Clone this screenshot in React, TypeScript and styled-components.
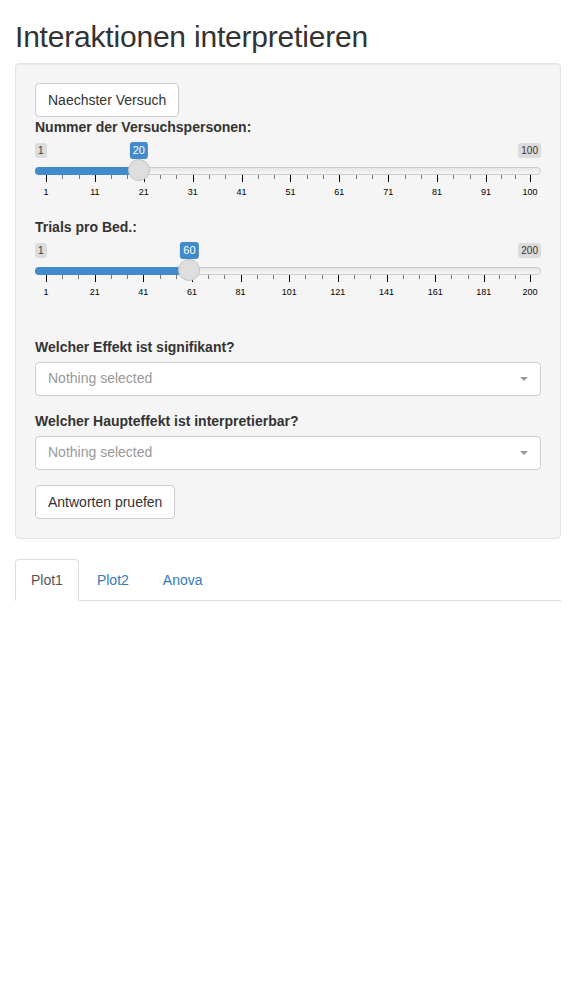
import styled, { createGlobalStyle } from "styled-components";

const GlobalStyle = createGlobalStyle`
  html, body {
    margin: 0;
    padding: 0;
    background: #ffffff;
  }
  body {
    font-family: "Liberation Sans", Arial, sans-serif;
    font-size: 14px;
    line-height: 1.42857;
    color: #333333;
  }
  * {
    box-sizing: border-box;
  }
`;

const Page = styled.div`
  padding: 0 15px;
`;

const Title = styled.h2`
  font-size: 30px;
  font-weight: 500;
  line-height: 1.1;
  letter-spacing: -0.2px;
  margin: 20px 0 10px;
`;

const Well = styled.div`
  display: flex;
  flex-direction: column;
  background: #f5f5f5;
  border: 1px solid #e3e3e3;
  border-radius: 4px;
  box-shadow: inset 0 1px 1px rgba(0, 0, 0, 0.05);
  padding: 19px;
  margin-bottom: 20px;
`;

const Button = styled.button`
  align-self: flex-start;
  height: 34px;
  padding: 6px 12px;
  font-family: inherit;
  font-size: 14px;
  line-height: 20px;
  color: #333333;
  background: #ffffff;
  border: 1px solid #cccccc;
  border-radius: 4px;
`;

const FormGroup = styled.div<{ $top?: number }>`
  margin-top: ${(p) => p.$top ?? 0}px;
  margin-bottom: 15px;
`;

const Label = styled.label`
  display: block;
  font-weight: bold;
  line-height: 20px;
  margin-bottom: 5px;
`;

const Irs = styled.div`
  position: relative;
  height: 60px;
`;

const Line = styled.div`
  position: absolute;
  left: 0;
  right: 0;
  top: 25px;
  height: 8px;
  border: 1px solid #cccccc;
  border-radius: 16px;
  background: linear-gradient(to bottom, #dedede -50%, #ffffff 150%);
`;

const Bar = styled.div`
  position: absolute;
  left: 0;
  top: 25px;
  height: 8px;
  background: #428bca;
  border-radius: 8px 0 0 8px;
`;

const Handle = styled.div`
  position: absolute;
  top: 17px;
  width: 22px;
  height: 22px;
  background: #dedede;
  border: 1px solid #c4c4c4;
  border-radius: 50%;
`;

const EdgeLabel = styled.span<{ $side: "left" | "right" }>`
  position: absolute;
  top: 1px;
  ${(p) => (p.$side === "left" ? "left: 0;" : "right: 0;")}
  font-size: 10px;
  line-height: 1.333;
  padding: 1px 3px;
  color: #333333;
  background: rgba(0, 0, 0, 0.1);
  border-radius: 3px;
`;

const ValueLabel = styled.span`
  position: absolute;
  top: 0;
  transform: translateX(-50%);
  font-size: 11px;
  line-height: 1.333;
  padding: 1px 3px;
  color: #ffffff;
  background: #428bca;
  border-radius: 3px;
`;

const Tick = styled.span<{ $small?: boolean }>`
  position: absolute;
  top: 33px;
  width: 1px;
  height: ${(p) => (p.$small ? 4 : 7)}px;
  background: ${(p) => (p.$small ? "#777" : "#000")};
`;

const TickText = styled.span`
  position: absolute;
  top: 44px;
  transform: translateX(-50%);
  font-size: 9px;
  line-height: 12px;
  color: #000000;
  white-space: nowrap;
`;

const Select = styled.div`
  display: flex;
  align-items: center;
  justify-content: space-between;
  height: 34px;
  padding: 6px 12px;
  background: #ffffff;
  border: 1px solid #cccccc;
  border-radius: 4px;
  color: #999999;
`;

const Caret = styled.span`
  width: 0;
  height: 0;
  border-top: 4px solid #999999;
  border-left: 4px solid transparent;
  border-right: 4px solid transparent;
`;

const Tabs = styled.ul`
  display: flex;
  list-style: none;
  margin: 0;
  padding: 0;
  border-bottom: 1px solid #dddddd;
`;

const Tab = styled.li<{ $active?: boolean }>`
  margin-right: 2px;
  margin-bottom: -1px;
  padding: 10px 15px;
  line-height: 20px;
  border: 1px solid ${(p) => (p.$active ? "#dddddd" : "transparent")};
  border-bottom-color: ${(p) => (p.$active ? "#ffffff" : "transparent")};
  border-radius: 4px 4px 0 0;
  background: ${(p) => (p.$active ? "#ffffff" : "transparent")};
  color: ${(p) => (p.$active ? "#555555" : "#337ab7")};
`;

type SliderProps = {
  label: string;
  min: number;
  max: number;
  value: number;
  ticks: number[];
};

function Slider({ label, min, max, value, ticks }: SliderProps) {
  const frac = (v: number) => (v - min) / (max - min);
  const at = (v: number) => `calc(11px + ${frac(v)} * (100% - 22px))`;
  const small: number[] = [];
  for (let i = 0; i < ticks.length - 1; i++) {
    const d = (ticks[i + 1] - ticks[i]) / 3;
    small.push(ticks[i] + d, ticks[i] + 2 * d);
  }
  return (
    <FormGroup>
      <Label>{label}</Label>
      <Irs>
        <Line />
        <Bar style={{ width: at(value) }} />
        <EdgeLabel $side="left">{min}</EdgeLabel>
        <EdgeLabel $side="right">{max}</EdgeLabel>
        {small.map((v) => (
          <Tick key={"s" + v} $small style={{ left: at(v) }} />
        ))}
        {ticks.map((v) => (
          <Tick key={v} style={{ left: at(v) }} />
        ))}
        {ticks.map((v) => (
          <TickText key={"t" + v} style={{ left: at(v) }}>
            {v}
          </TickText>
        ))}
        <Handle style={{ left: `calc(${frac(value)} * (100% - 22px))` }} />
        <ValueLabel style={{ left: at(value) }}>{value}</ValueLabel>
      </Irs>
    </FormGroup>
  );
}

export default function App() {
  return (
    <Page>
      <GlobalStyle />
      <Title>Interaktionen interpretieren</Title>
      <Well>
        <Button>Naechster Versuch</Button>
        <Slider
          label="Nummer der Versuchspersonen:"
          min={1}
          max={100}
          value={20}
          ticks={[1, 11, 21, 31, 41, 51, 61, 71, 81, 91, 100]}
        />
        <Slider
          label="Trials pro Bed.:"
          min={1}
          max={200}
          value={60}
          ticks={[1, 21, 41, 61, 81, 101, 121, 141, 161, 181, 200]}
        />
        <FormGroup $top={20}>
          <Label>Welcher Effekt ist signifikant?</Label>
          <Select>
            Nothing selected
            <Caret />
          </Select>
        </FormGroup>
        <FormGroup>
          <Label>Welcher Haupteffekt ist interpretierbar?</Label>
          <Select>
            Nothing selected
            <Caret />
          </Select>
        </FormGroup>
        <Button>Antworten pruefen</Button>
      </Well>
      <Tabs>
        <Tab $active>Plot1</Tab>
        <Tab>Plot2</Tab>
        <Tab>Anova</Tab>
      </Tabs>
    </Page>
  );
}
